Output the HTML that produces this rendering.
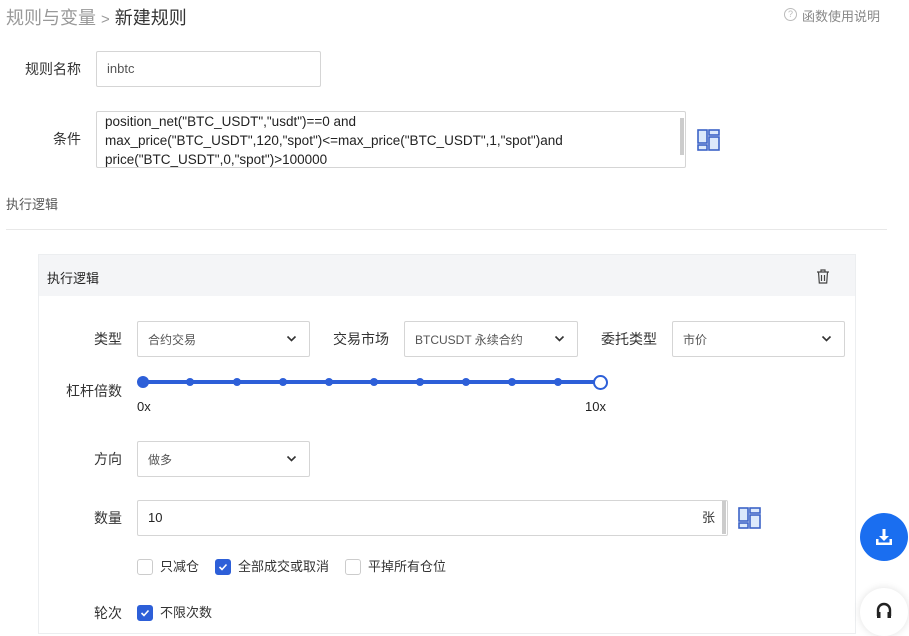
<!DOCTYPE html>
<html><head><meta charset="utf-8"><style>
*{box-sizing:border-box;margin:0;padding:0}
body{width:909px;height:626px;overflow:hidden;background:#fff;font-family:"Liberation Sans","Noto Sans CJK SC",sans-serif;position:relative;color:#333}
.a{position:absolute;white-space:nowrap}
.lbl{font-size:14px;color:#333;line-height:16px}
.box{position:absolute;border:1px solid #d5d5d5;background:#fff;border-radius:2px}
.sel{font-size:12px;color:#555;padding-left:10px;display:flex;align-items:center}
.sel svg{position:absolute;right:12px;top:13px}
.cb{position:absolute;width:16px;height:16px;border:1px solid #ccc;border-radius:3px;background:#fff}
.cb.on{background:#2d5fd8;border-color:#2d5fd8}
.dot{position:absolute;width:8px;height:8px;border-radius:50%;background:#2d5fd8;top:378px}
</style></head><body>
<div class="a" style="left:6px;top:4px;font-size:18px;color:#999">规则与变量 <span style="font-size:15px">&gt;</span> <span style="color:#333">新建规则</span></div>
<div class="a" style="left:784px;top:8px;width:13px;height:13px;border:1px solid #bbb;border-radius:50%;font-size:9px;color:#bbb;text-align:center;line-height:11px">?</div>
<div class="a" style="left:802px;top:6px;font-size:13px;color:#888">函数使用说明</div>

<div class="a lbl" style="left:25px;top:61px">规则名称</div>
<div class="box" style="left:96px;top:51px;width:225px;height:36px;font-size:13px;color:#555;padding:9px 10px">inbtc</div>
<div class="a lbl" style="left:53px;top:131px">条件</div>
<div class="box" style="left:96px;top:111px;width:590px;height:57px;font-size:13.5px;color:#222;padding:0 8px;line-height:19px;white-space:nowrap;overflow:hidden">position_net("BTC_USDT","usdt")==0 and<br>max_price("BTC_USDT",120,"spot")&lt;=max_price("BTC_USDT",1,"spot")and<br>price("BTC_USDT",0,"spot")&gt;100000</div>
<div class="a" style="left:680px;top:118px;width:4px;height:37px;background:#ccc"></div>
<svg class="a" style="left:697px;top:129px" width="23" height="22" viewBox="0 0 23 22"><g fill="#dce9fb" stroke="#3c63c7" stroke-width="1.6"><rect x="1" y="1" width="9" height="13"/><rect x="1" y="16" width="9" height="5"/><rect x="12" y="1" width="10" height="5"/><rect x="12" y="8" width="10" height="13"/></g></svg>

<div class="a" style="left:6px;top:194px;font-size:13px;color:#555">执行逻辑</div>
<div class="a" style="left:6px;top:229px;width:881px;height:1px;background:#e8e8e8"></div>

<div class="a" style="left:38px;top:254px;width:818px;height:380px;border:1px solid #eceef0"></div>
<div class="a" style="left:39px;top:255px;width:816px;height:41px;background:#f4f5f7"></div>
<div class="a" style="left:47px;top:268px;font-size:13px;color:#222">执行逻辑</div>
<svg class="a" style="left:816px;top:269px" width="14" height="15" viewBox="0 0 14 15"><g fill="none" stroke="#444" stroke-width="1.2"><path d="M1 3h12M5 3V1h4v2M2.5 3l.8 11h7.4l.8-11M5.5 6v6M8.5 6v6"/></g></svg>

<div class="a lbl" style="left:94px;top:331px">类型</div>
<div class="box sel" style="left:137px;top:321px;width:173px;height:36px">合约交易<svg width="11" height="8" viewBox="0 0 11 8"><path d="M1.5 1.5l4 4 4-4" fill="none" stroke="#333" stroke-width="1.6"/></svg></div>
<div class="a lbl" style="left:333px;top:331px">交易市场</div>
<div class="box sel" style="left:404px;top:321px;width:174px;height:36px">BTCUSDT 永续合约<svg width="11" height="8" viewBox="0 0 11 8"><path d="M1.5 1.5l4 4 4-4" fill="none" stroke="#333" stroke-width="1.6"/></svg></div>
<div class="a lbl" style="left:601px;top:331px">委托类型</div>
<div class="box sel" style="left:672px;top:321px;width:173px;height:36px">市价<svg width="11" height="8" viewBox="0 0 11 8"><path d="M1.5 1.5l4 4 4-4" fill="none" stroke="#333" stroke-width="1.6"/></svg></div>

<div class="a lbl" style="left:66px;top:383px">杠杆倍数</div>
<div class="a" style="left:143px;top:380px;width:457px;height:4px;background:#2d5fd8"></div>
<div class="a" style="left:137px;top:376px;width:12px;height:12px;border-radius:50%;background:#2d5fd8"></div>
<div class="dot" style="left:186px"></div><div class="dot" style="left:233px"></div><div class="dot" style="left:279px"></div><div class="dot" style="left:325px"></div><div class="dot" style="left:370px"></div><div class="dot" style="left:416px"></div><div class="dot" style="left:462px"></div><div class="dot" style="left:508px"></div><div class="dot" style="left:554px"></div>
<div class="a" style="left:593px;top:375px;width:15px;height:15px;border-radius:50%;background:#fff;border:2px solid #2d5fd8"></div>
<div class="a" style="left:137px;top:399px;font-size:13px;color:#222">0x</div>
<div class="a" style="left:585px;top:399px;font-size:13px;color:#222">10x</div>

<div class="a lbl" style="left:94px;top:451px">方向</div>
<div class="box sel" style="left:137px;top:441px;width:173px;height:36px">做多<svg width="11" height="8" viewBox="0 0 11 8"><path d="M1.5 1.5l4 4 4-4" fill="none" stroke="#333" stroke-width="1.6"/></svg></div>

<div class="a lbl" style="left:94px;top:510px">数量</div>
<div class="box" style="left:137px;top:500px;width:591px;height:36px;font-size:13px;color:#222;padding:9px 10px">10</div>
<div class="a" style="left:702px;top:510px;font-size:13px;color:#333;line-height:16px">张</div>
<div class="a" style="left:722px;top:501px;width:4px;height:33px;background:#ccc"></div>
<svg class="a" style="left:738px;top:507px" width="23" height="22" viewBox="0 0 23 22"><g fill="#dce9fb" stroke="#3c63c7" stroke-width="1.6"><rect x="1" y="1" width="9" height="13"/><rect x="1" y="16" width="9" height="5"/><rect x="12" y="1" width="10" height="5"/><rect x="12" y="8" width="10" height="13"/></g></svg>

<div class="cb" style="left:137px;top:559px"></div>
<div class="a lbl" style="left:160px;top:559px;font-size:13px">只减仓</div>
<div class="cb on" style="left:215px;top:559px"><svg width="14" height="14" viewBox="0 0 14 14"><path d="M3.5 7l2.5 2.5 4.5-5" fill="none" stroke="#fff" stroke-width="1.6"/></svg></div>
<div class="a lbl" style="left:238px;top:559px;font-size:13px">全部成交或取消</div>
<div class="cb" style="left:345px;top:559px"></div>
<div class="a lbl" style="left:368px;top:559px;font-size:13px">平掉所有仓位</div>

<div class="a lbl" style="left:94px;top:605px">轮次</div>
<div class="cb on" style="left:137px;top:605px"><svg width="14" height="14" viewBox="0 0 14 14"><path d="M3.5 7l2.5 2.5 4.5-5" fill="none" stroke="#fff" stroke-width="1.6"/></svg></div>
<div class="a lbl" style="left:160px;top:605px;font-size:13px">不限次数</div>

<div class="a" style="left:860px;top:513px;width:48px;height:48px;border-radius:50%;background:#1a6ef0"></div>
<svg class="a" style="left:874px;top:527px" width="20" height="20" viewBox="0 0 20 20"><g fill="#fff"><rect x="8.5" y="2" width="3" height="8"/><path d="M5 9h10l-5 5z"/><path d="M2 12h2.5v3.5h11V12H18v6H2z"/></g></svg>
<div class="a" style="left:860px;top:588px;width:48px;height:48px;border-radius:50%;background:#fff;box-shadow:0 0 8px rgba(0,0,0,.12)"></div>
<svg class="a" style="left:874px;top:600px" width="20" height="20" viewBox="0 0 20 20"><path d="M4 16v-6a6 6 0 0 1 12 0v6" fill="none" stroke="#222" stroke-width="2.4"/><rect x="3" y="12" width="3.5" height="6" fill="#222"/><rect x="13.5" y="12" width="3.5" height="6" fill="#222"/></svg>
</body></html>
